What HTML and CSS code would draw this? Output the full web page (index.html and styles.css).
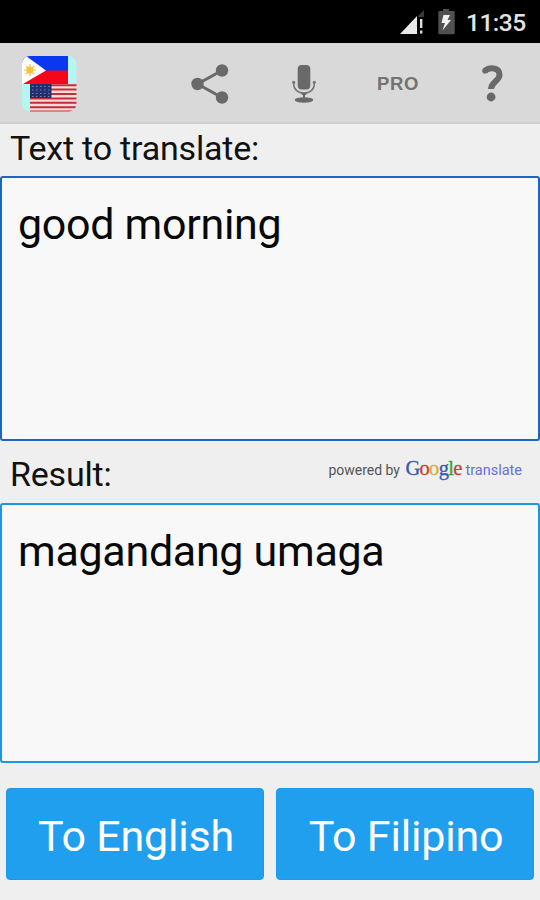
FILE: index.html
```html
<!DOCTYPE html>
<html lang="en">
<head>
  <meta charset="UTF-8" />
  <title>Filipino English Translator</title>
  <link rel="stylesheet" href="styles.css">
</head>
<body>
  <div class="status-bar">
    <svg class="signal" width="26" height="26" viewBox="0 0 26 26">
      <path d="M19 7L25 1V8H19z" fill="#383838"/>
      <path d="M1 25L18 7V25z" fill="#e8e8e8"/>
      <path d="M21 10h2.400v9H21zM21 21.500h2.400v3H21z" fill="#dcdcdc"/>
    </svg>
    <svg class="battery" width="17" height="26" viewBox="0 0 17 26">
      <path d="M5 0h6v2h4.500q1.200 0 1.200 1.200V24q0 1.200-1.200 1.200H1.500Q.3 25.200.3 24V3.200Q.3 2 1.500 2H5z" fill="#505050"/>
      <path d="M5.500 6H12L9.500 11H13L4.500 21.500L7 14H3.500z" fill="#f2f2f2"/>
    </svg>
    <span class="clock">11:35</span>
  </div>

  <header class="toolbar">
    <svg class="app-icon" width="55" height="56" viewBox="0 0 55 56">
      <defs>
        <clipPath id="round"><rect width="54.500" height="55.500" rx="8"/></clipPath>
      </defs>
      <g clip-path="url(#round)">
        <rect width="55" height="56" fill="#b5f5f2"/>
        <rect width="46" height="15" fill="#0a38f0"/>
        <rect y="14.500" width="46" height="13.500" fill="#f5061a"/>
        <path d="M0 0H4L24 14.500L1 28H0z" fill="#fff"/>
        <circle cx="8" cy="14" r="3.600" fill="#f4c33a"/>
        <path d="M8 8v12M2 14h12M4 10l8 8M12 10l-8 8" stroke="#f4c33a" stroke-width="1.200"/>
        <rect x="8" y="28" width="47" height="28" fill="#f6dcda"/>
        <path d="M8 29.200h47M8 33.600h47M8 38h47M8 42.400h47M8 46.800h47M8 51.200h47M8 55.400h47" stroke="#c52d38" stroke-width="2"/>
        <rect x="8" y="28" width="21.500" height="14" fill="#222f70"/>
        <path d="M10 30.500h19M10 34h19M10 37.500h19M10 40.500h19" stroke="#7380ad" stroke-width="1" stroke-dasharray="1.500 2.500"/>
      </g>
    </svg>

    <nav class="actions">
      <a class="action" title="Share">
        <svg width="38" height="40" viewBox="0 0 38 40">
          <path d="M31 6.500L6.500 20L31 33.500" fill="none" stroke="#696969" stroke-width="3"/>
          <circle cx="31" cy="6.500" r="6.200" fill="#696969"/>
          <circle cx="6.500" cy="20" r="6.200" fill="#696969"/>
          <circle cx="31" cy="33.500" r="6.200" fill="#696969"/>
        </svg>
      </a>
      <a class="action" title="Speak">
        <svg width="24" height="38" viewBox="0 0 24 38">
          <rect x="5.700" y="0" width="12.600" height="24.500" rx="4" fill="#696969"/>
          <path d="M1.700 17.500V19C1.700 24.500 6 28 12 28S22.300 24.500 22.300 19V17.500" fill="none" stroke="#747474" stroke-width="1.500"/>
          <circle cx="1.700" cy="17.300" r="1.600" fill="#747474"/>
          <circle cx="22.300" cy="17.300" r="1.600" fill="#747474"/>
          <path d="M8.500 28h7L13 30.500V34h-2v-3.500z" fill="#696969"/>
          <ellipse cx="12" cy="35" rx="9.300" ry="2.700" fill="#696969"/>
        </svg>
      </a>
      <a class="action pro">PRO</a>
      <a class="action" title="Help">
        <svg width="22" height="37" viewBox="0 0 22 37">
          <path d="M3.800 6C8 2.300 18.500 1.500 18.500 10C18.500 16 10.200 16.500 10 24" fill="none" stroke="#696969" stroke-width="6"/>
          <circle cx="4" cy="5.800" r="2.800" fill="#696969"/>
          <circle cx="10.100" cy="32" r="4.400" fill="#696969"/>
        </svg>
      </a>
    </nav>
  </header>

  <main>
    <label class="caption" for="source">Text to translate:</label>
    <textarea id="source" class="box source" spellcheck="false">good morning</textarea>

    <div class="result-row">
      <label class="caption" for="result">Result:</label>
      <div class="powered">
        <span class="by">powered by</span>
        <span class="google"><span class="blue">G</span><span class="red">o</span><span class="yellow">o</span><span class="blue">g</span><span class="green">l</span><span class="red">e</span></span>
        <span class="translate">translate</span>
      </div>
    </div>
    <textarea id="result" class="box result" spellcheck="false" readonly>magandang umaga</textarea>

    <div class="buttons">
      <button type="button">To English</button>
      <button type="button">To Filipino</button>
    </div>
  </main>
</body>
</html>
```
FILE: styles.css
```css
* {
  box-sizing: border-box;
}

body {
  margin: 0;
  height: 900px;
  background: #efefef;
  font-family: Roboto, sans-serif;
  color: #111;
  overflow: hidden;
}

.status-bar {
  display: flex;
  justify-content: flex-end;
  height: 43px;
  padding: 9px 13px 0 0;
  background: #000;
}

.battery {
  margin: 0 11px 0 13px;
}

.clock {
  width: 61px;
  font-size: 24.5px;
  font-weight: 500;
  line-height: 28px;
  letter-spacing: -0.5px;
  white-space: nowrap;
  color: #e4e4e4;
}

.toolbar {
  display: flex;
  align-items: center;
  height: 81px;
  padding: 2px 1px 0 22px;
  background: #d9d9d9;
  border-bottom: 2px solid #d0d0d0;
}

.actions {
  display: flex;
  margin-left: auto;
}

.action {
  display: flex;
  align-items: center;
  justify-content: center;
  width: 94px;
}

.pro {
  font-family: "Liberation Sans", Arial, sans-serif;
  font-size: 18.5px;
  font-weight: bold;
  letter-spacing: 0.7px;
  color: #727272;
}

.caption {
  display: block;
  height: 52px;
  padding-left: 10px;
  font-size: 34px;
  line-height: 49px;
  letter-spacing: -0.2px;
  white-space: nowrap;
}

.box {
  display: block;
  width: 100%;
  margin: 0;
  padding: 20px 16px;
  border: 2px solid #1a66c4;
  border-radius: 3px;
  background: #f8f8f8;
  color: #080808;
  font-family: inherit;
  font-size: 43px;
  line-height: 52px;
  letter-spacing: -0.3px;
  resize: none;
  outline: none;
}

.source {
  height: 265px;
}

.result {
  height: 260px;
  border-color: #1c96de;
}

.result-row {
  display: flex;
  justify-content: space-between;
  height: 62px;
  padding-right: 18px;
}

.result-row .caption {
  line-height: 66px;
}

.powered {
  display: flex;
  align-items: baseline;
  padding-top: 16px;
  white-space: nowrap;
}

.by {
  width: 77px;
  font-size: 14px;
  color: #555;
}

.google {
  width: 60px;
  font-family: "Liberation Serif", serif;
  font-size: 20.5px;
  letter-spacing: -0.7px;
  -webkit-text-stroke: 0.3px;
}

.translate {
  font-size: 14.5px;
  color: #6670d8;
}

.blue {
  color: #3659b0;
}

.red {
  color: #c8402f;
}

.yellow {
  color: #dfac2b;
}

.green {
  color: #36a13c;
}

.buttons {
  display: flex;
  gap: 12px;
  padding: 25px 6px 0;
}

button {
  flex: 1;
  height: 92px;
  padding: 3px 0 0 2px;
  border: 1px solid #1a9aea;
  border-radius: 4px;
  background: #209fef;
  color: #fff;
  font-family: inherit;
  font-size: 43px;
  letter-spacing: -0.2px;
  white-space: nowrap;
}
```
